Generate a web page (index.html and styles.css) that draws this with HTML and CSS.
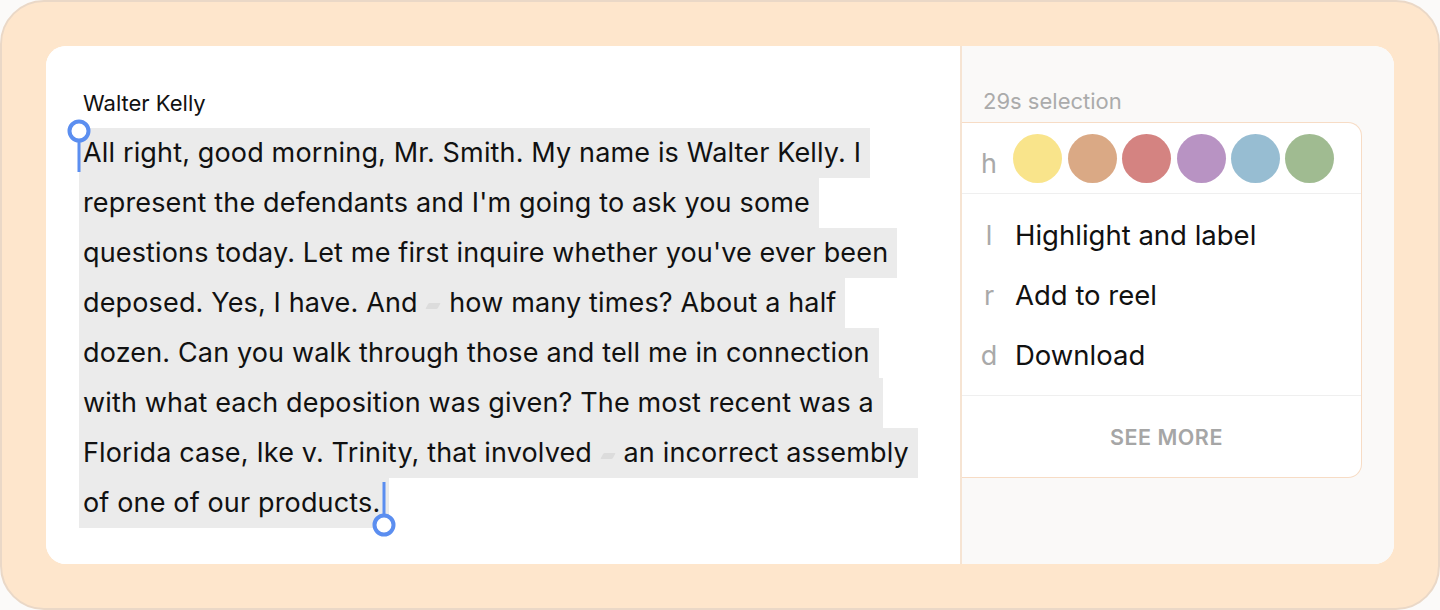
FILE: index.html
```html
<!DOCTYPE html>
<html lang="en">
<head>
<meta charset="utf-8">
<title>Selection</title>
<link rel="stylesheet" href="styles.css">
</head>
<body>
<div class="frame">
  <div class="card">
    <section class="transcript">
      <div class="speaker">Walter Kelly</div>
      <div class="passage">
        <div class="line">All right, good morning, Mr. Smith. My name is Walter Kelly. I</div>
        <div class="line">represent the defendants and I'm going to ask you some</div>
        <div class="line">questions today. Let me first inquire whether you've ever been</div>
        <div class="line">deposed. Yes, I have. And <span class="gap"></span> how many times? About a half</div>
        <div class="line">dozen. Can you walk through those and tell me in connection</div>
        <div class="line">with what each deposition was given? The most recent was a</div>
        <div class="line">Florida case, Ike v. Trinity, that involved <span class="gap"></span> an incorrect assembly</div>
        <div class="line">of one of our products.</div>
        <svg class="handle handle-start" width="30" height="60" viewBox="0 0 30 60">
          <line x1="15" y1="24" x2="15" y2="56" />
          <circle cx="15" cy="15" r="9.5" />
        </svg>
        <svg class="handle handle-end" width="30" height="60" viewBox="0 0 30 60">
          <line x1="15" y1="4" x2="15" y2="38" />
          <circle cx="15" cy="47" r="9.5" />
        </svg>
      </div>
    </section>
    <aside class="side">
      <div class="sel-title">29s selection</div>
      <div class="menu">
        <div class="colors">
          <span class="key">h</span>
          <span class="dot dot-yellow"></span>
          <span class="dot dot-tan"></span>
          <span class="dot dot-red"></span>
          <span class="dot dot-purple"></span>
          <span class="dot dot-blue"></span>
          <span class="dot dot-green"></span>
        </div>
        <div class="items">
          <div class="item"><span class="key">l</span><span class="label">Highlight and label</span></div>
          <div class="item"><span class="key">r</span><span class="label">Add to reel</span></div>
          <div class="item"><span class="key">d</span><span class="label">Download</span></div>
        </div>
        <div class="more">SEE MORE</div>
      </div>
    </aside>
  </div>
</div>
</body>
</html>
```
FILE: styles.css
```css
* { box-sizing: border-box; }
html, body { margin: 0; padding: 0; }
body {
  background: #fbfaf9;
  font-family: Inter, "Noto Sans", "Liberation Sans", sans-serif;
  color: #111;
}
.frame {
  width: 1440px;
  height: 610px;
  border: 2px solid #ead8c7;
  border-radius: 44px;
  background: #fee6cc;
  padding: 44px 44px 44px 44px;
}
.card {
  display: flex;
  height: 518px;
  border-radius: 20px;
  overflow: hidden;
  background: #fff;
}
.transcript {
  width: 914px;
  padding: 45px 0 0 33px;
  background: #fff;
}
.speaker {
  font-size: 22px;
  line-height: 24px;
  padding-left: 4px;
  margin-bottom: 13px;
  color: #111;
}
.passage {
  position: relative;
  font-size: 27px;
  line-height: 50px;
  letter-spacing: 0.15px;
}
.line {
  width: fit-content;
  white-space: nowrap;
  background: #ebebeb;
  padding: 0 9px 0 4px;
}
.gap {
  display: inline-block;
  width: 12px;
  height: 6px;
  margin: 0 2px;
  background: #dcdcdc;
  border-radius: 1px;
  transform: skewX(-30deg);
  vertical-align: 3px;
}
.handle {
  position: absolute;
  fill: #fff;
  stroke: #5b8ef0;
}
.handle circle { stroke-width: 4; }
.handle line { stroke-width: 3; }
.handle-start { left: -15px; top: -12px; }
.handle-end { left: 290px; top: 350px; }

.side {
  flex: 1;
  background: #faf9f8;
  border-left: 2px solid #f6e4d3;
  padding-top: 42px;
}
.sel-title {
  font-size: 22px;
  line-height: 26px;
  color: #ababab;
  padding-left: 21px;
  margin-bottom: 8px;
}
.menu {
  width: 400px;
  background: #fff;
  border: 1.5px solid #f7dcc5;
  border-left: none;
  border-radius: 0 14px 14px 0;
}
.key {
  display: inline-block;
  width: 30px;
  text-align: center;
  color: #a9a9a9;
  font-size: 27px;
}
.colors {
  display: flex;
  align-items: center;
  height: 71px;
  padding-left: 12px;
  gap: 5.4px;
  border-bottom: 1.5px solid #efefef;
}
.colors .key { margin-top: 10px; margin-right: 4px; }
.dot {
  width: 49px;
  height: 49px;
  border-radius: 50%;
}
.dot-yellow { background: #f9e48b; }
.dot-tan { background: #daa985; }
.dot-red { background: #d48381; }
.dot-purple { background: #b893c3; }
.dot-blue { background: #97bdd2; }
.dot-green { background: #a0bb91; }
.items {
  padding: 11px 0 10px 12px;
  border-bottom: 1.5px solid #efefef;
}
.item {
  display: flex;
  align-items: center;
  height: 60px;
  gap: 11px;
}
.label {
  font-size: 27.5px;
  color: #111;
}
.more {
  height: 81px;
  display: flex;
  align-items: center;
  justify-content: center;
  padding-left: 10px;
  font-size: 21.5px;
  font-weight: 600;
  letter-spacing: 0.5px;
  color: #a6a6a6;
}
```
